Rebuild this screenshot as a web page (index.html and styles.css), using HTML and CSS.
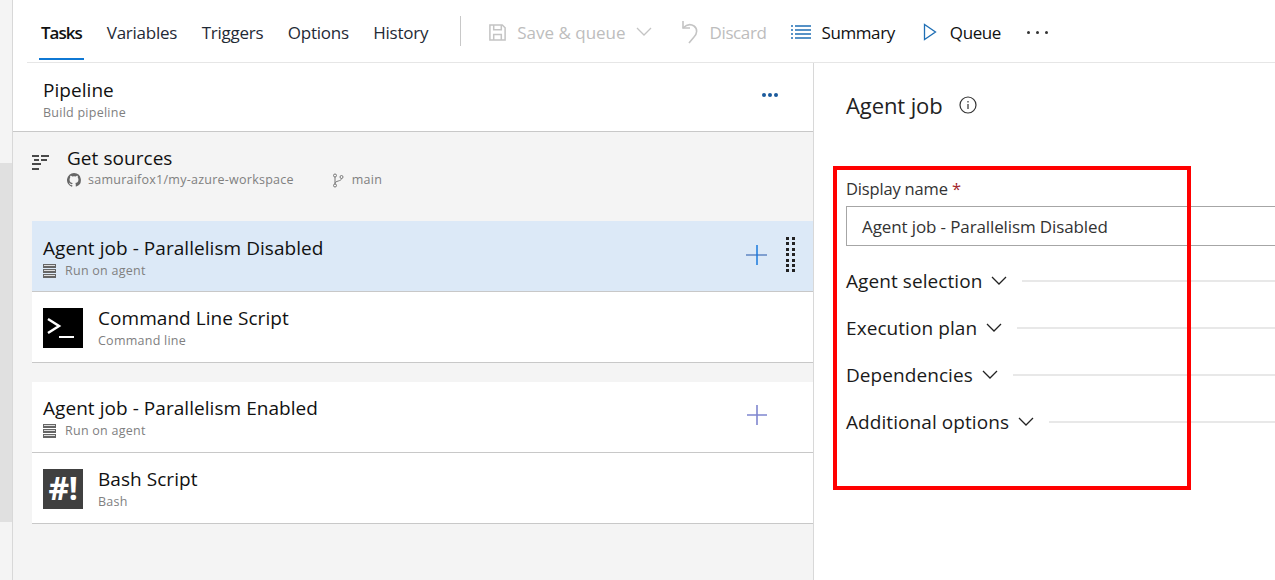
FILE: index.html
```html
<!DOCTYPE html>
<html lang="en">
<head>
    <meta charset="UTF-8">
    <title>Pipeline - Tasks</title>
    <link rel="stylesheet" href="styles.css">
</head>
<body>
    <div class="rail">
        <div class="rail-top"></div>
        <div class="rail-mid"></div>
    </div>
    <div class="main">
        <div class="toolbar">
            <a class="tab active">Tasks</a>
            <a class="tab">Variables</a>
            <a class="tab">Triggers</a>
            <a class="tab">Options</a>
            <a class="tab">History</a>
            <span class="divider"></span>
            <span class="cmd disabled save">
                <svg width="19" height="19" viewBox="0 0 20 20" fill="none" stroke="#c4c4c4" stroke-width="1.6"><path d="M2 2h13l3 3v13H2z"/><path d="M6 2v5h8V2M6 18v-6h8v6"/></svg>
                Save &amp; queue
                <svg class="chev" width="16" height="10" viewBox="0 0 16 10" fill="none" stroke="#c4c4c4" stroke-width="1.3"><path d="M1 1l7 7 7-7"/></svg>
            </span>
            <span class="cmd disabled discard">
                <svg width="18" height="24" viewBox="0 0 18 24" fill="none" stroke="#c4c4c4" stroke-width="1.6"><path d="M2 1v7h7"/><path d="M2 8c4-4 8-4 11-2 4 3 3 8 0 11l-5 6"/></svg>
                Discard
            </span>
            <span class="cmd summary">
                <svg width="20" height="14" viewBox="0 0 20 14" fill="none" stroke="#1f6fb5" stroke-width="1.3"><path d="M0 1h2M4 1h16M0 5h2M4 5h16M0 9h2M4 9h16M0 13h2M4 13h16"/></svg>
                Summary
            </span>
            <span class="cmd queue">
                <svg width="14" height="18" viewBox="0 0 14 18" fill="none" stroke="#1f6fb5" stroke-width="1.3"><path d="M1.500 1.500v15L12.500 9z"/></svg>
                Queue
            </span>
            <span class="more">
                <i></i><i></i><i></i>
            </span>
        </div>
        <div class="content">
            <div class="left">
                <div class="pipeline">
                    <div>
                        <div class="title">Pipeline</div>
                        <div class="sub">Build pipeline</div>
                    </div>
                    <span class="more blue"><i></i><i></i><i></i></span>
                </div>
                <div class="sources">
                    <svg class="src-icon" width="18" height="15" viewBox="0 0 18 15" fill="none" stroke="#111" stroke-width="1.400"><path d="M1 1h7M10 1h8M3 5h5M10 5h6M1 9h9M1 14h7"/></svg>
                    <div>
                        <div class="title">Get sources</div>
                        <div class="sub src-meta">
                            <svg width="14" height="14" viewBox="0 0 16 16" fill="#666"><path d="M8 0a8 8 0 0 0-2.500 15.600c.4.100.5-.2.500-.4v-1.400c-2.200.5-2.700-1-2.700-1-.4-.9-.9-1.200-.9-1.200-.7-.5.100-.5.100-.5.800.100 1.200.8 1.200.8.700 1.200 1.900.9 2.300.7.100-.5.300-.9.500-1.100-1.800-.2-3.600-.9-3.600-4 0-.9.300-1.600.8-2.100-.1-.2-.4-1 .1-2.100 0 0 .7-.2 2.200.8a7.600 7.600 0 0 1 4 0c1.500-1 2.200-.8 2.200-.8.400 1.100.2 1.900.1 2.100.5.600.8 1.300.8 2.100 0 3.100-1.900 3.700-3.600 3.900.3.300.5.800.5 1.500v2.200c0 .2.100.5.600.4A8 8 0 0 0 8 0z"/></svg>
                            <span class="repo">samuraifox1/my-azure-workspace</span>
                            <svg width="12" height="15" viewBox="0 0 12 15" fill="none" stroke="#777" stroke-width="1"><circle cx="3" cy="2.500" r="1.500"/><circle cx="3" cy="12.500" r="1.500"/><circle cx="9.500" cy="4" r="1.500"/><path d="M3 4v7M9.500 5.500c0 3-6.500 2-6.500 5"/></svg>
                            <span class="branch">main</span>
                        </div>
                    </div>
                </div>

                <div class="job selected">
                    <div>
                        <div class="title">Agent job - Parallelism Disabled</div>
                        <div class="sub agent">
                            <svg width="13" height="14" viewBox="0 0 13 14" fill="#666"><path d="M0 0h13v4H0zM0 5h13v4H0zM0 10h13v4H0z"/><path d="M1 1.500h11M1 6.500h11M1 11.500h11" stroke="#ddd" stroke-width="1"/></svg>
                            Run on agent
                        </div>
                    </div>
                    <svg class="plus" width="22" height="22" viewBox="0 0 22 22"><path d="M0 11h21" stroke="#7f9fd0" stroke-width="2"/><path d="M11 1v20" stroke="#1a78dc" stroke-width="1.500"/></svg>
                    <span class="grip"><i></i><i></i><i></i><i></i><i></i><i></i><i></i><i></i><i></i><i></i><i></i><i></i><i></i><i></i></span>
                </div>
                <div class="task">
                    <div class="task-icon black">
                        <svg width="40" height="40" viewBox="0 0 40 40" fill="none" stroke="#fff"><path d="M5 11l11 7-11 7" stroke-width="2.500"/><path d="M16 29h15" stroke-width="2"/></svg>
                    </div>
                    <div>
                        <div class="title">Command Line Script</div>
                        <div class="sub">Command line</div>
                    </div>
                </div>

                <div class="job second">
                    <div>
                        <div class="title">Agent job - Parallelism Enabled</div>
                        <div class="sub agent">
                            <svg width="13" height="14" viewBox="0 0 13 14" fill="#666"><path d="M0 0h13v4H0zM0 5h13v4H0zM0 10h13v4H0z"/><path d="M1 1.500h11M1 6.500h11M1 11.500h11" stroke="#ddd" stroke-width="1"/></svg>
                            Run on agent
                        </div>
                    </div>
                    <svg class="plus" width="22" height="22" viewBox="0 0 22 22"><path d="M1 11h20M11 1v20" stroke="#7f86cf" stroke-width="1.600"/></svg>
                </div>
                <div class="task">
                    <div class="task-icon gray">#!</div>
                    <div>
                        <div class="title">Bash Script</div>
                        <div class="sub">Bash</div>
                    </div>
                </div>
            </div>

            <div class="right">
                <div class="heading">
                    Agent job
                    <svg width="18" height="18" viewBox="0 0 18 18" fill="none" stroke="#333" stroke-width="1.200"><circle cx="9" cy="9" r="8"/><path d="M9 8v5M9 5v1.500"/></svg>
                </div>
                <label class="field-label">Display name <span class="req">*</span></label>
                <div class="input">Agent job - Parallelism Disabled</div>
                <div class="group first"><span>Agent selection</span><svg width="16" height="10" viewBox="0 0 16 10" fill="none" stroke="#222" stroke-width="1.300"><path d="M1 1l7 7 7-7"/></svg><b></b></div>
                <div class="group"><span>Execution plan</span><svg width="16" height="10" viewBox="0 0 16 10" fill="none" stroke="#222" stroke-width="1.300"><path d="M1 1l7 7 7-7"/></svg><b></b></div>
                <div class="group"><span>Dependencies</span><svg width="16" height="10" viewBox="0 0 16 10" fill="none" stroke="#222" stroke-width="1.300"><path d="M1 1l7 7 7-7"/></svg><b></b></div>
                <div class="group"><span>Additional options</span><svg width="16" height="10" viewBox="0 0 16 10" fill="none" stroke="#222" stroke-width="1.300"><path d="M1 1l7 7 7-7"/></svg><b></b></div>
            </div>
        </div>
    </div>
    <div class="redbox"></div>
</body>
</html>
```

FILE: styles.css
```css
html, body {
    height: 100%;
}
body {
    margin: 0;
    display: flex;
    height: 580px;
    overflow: hidden;
    background: #fff;
    color: #1a1a1a;
    font-family: "Open Sans", sans-serif;
    font-size: 17px;
}
.rail {
    width: 12px;
    border-right: 1px solid #d8d8d8;
    background: #f4f4f4;
}
.rail-top {
    height: 163px;
}
.rail-mid {
    height: 359px;
    background: #e0e0e0;
}
.main {
    flex: 1;
    min-width: 0;
}

/* toolbar */
.toolbar {
    height: 60px;
    padding-top: 2px;
    margin-left: 14px;
    display: flex;
    align-items: center;
    border-bottom: 1px solid #e6e6e6;
    padding-left: 14px;
    letter-spacing: -0.4px;
    white-space: nowrap;
}
.tab {
    position: relative;
    margin-right: 24.500px;
    letter-spacing: -0.25px;
    color: #1f2a36;
}
.tab.active {
    font-weight: 600;
    letter-spacing: -1px;
    margin-right: 25px;
    color: #111;
}
.tab.active::after {
    content: "";
    position: absolute;
    left: -2px;
    right: -2px;
    top: 37px;
    height: 2px;
    background: #0f78d4;
}
.divider {
    width: 1px;
    height: 30px;
    background: #c8c8c8;
    margin: -2px 27px 0 7.500px;
}
.cmd {
    display: flex;
    align-items: center;
    gap: 10px;
    color: #111;
}
.cmd.disabled {
    color: #bdbdbd;
}
.save {
    letter-spacing: 0;
    margin-right: 29px;
}
.discard {
    gap: 11px;
    margin-right: 25px;
}
.summary {
    margin-right: 28px;
}
.queue {
    gap: 13px;
    margin-right: 26px;
}
.more {
    display: flex;
    gap: 6px;
}
.more i {
    width: 3px;
    height: 3px;
    border-radius: 50%;
    background: #333;
}
.more.blue {
    gap: 2px;
}
.more.blue i {
    width: 4px;
    height: 4px;
    background: #1b5a9c;
}

/* left panel */
.content {
    display: flex;
    height: 517px;
}
.left {
    width: 801px;
    flex-shrink: 0;
    box-sizing: border-box;
    border-right: 1px solid #d8d8d8;
    background: #f4f4f4;
}
.title {
    font-size: 19px;
    line-height: 26px;
    letter-spacing: 0.05px;
    color: #111;
}
.sub {
    font-size: 12.500px;
    line-height: 18px;
    margin-top: 1px;
    letter-spacing: 0.25px;
    color: #80807f;
}
.pipeline {
    height: 69px;
    box-sizing: border-box;
    border-bottom: 1px solid #c8c8c8;
    background: #fff;
    padding: 14px 35px 0 30px;
    display: flex;
    justify-content: space-between;
}
.pipeline .more {
    margin-top: 16px;
}
.sources {
    height: 89px;
    display: flex;
    box-sizing: border-box;
    padding: 13px 0 0 18px;
}
.src-icon {
    margin: 10px 18px 0 0;
}
.src-meta {
    display: flex;
    align-items: center;
    gap: 7px;
    margin-top: 0;
}
.repo {
    margin-right: 31px;
}
.branch {
    margin-left: 1px;
}
.job {
    height: 71px;
    margin-left: 19px;
    box-sizing: border-box;
    border-bottom: 1px solid #c8c8c8;
    padding: 14px 0 0 11px;
    background: #fff;
    display: flex;
    align-items: flex-start;
}
.job.selected {
    background: #dce9f7;
}
.job.second {
    margin-top: 19px;
    padding-top: 13px;
}
.job > div {
    flex: 1;
}
.agent {
    display: flex;
    align-items: center;
    gap: 9px;
}
.plus {
    margin: 9px 45px 0 0;
}
.job.selected .plus {
    margin: 9px 18px 0 0;
}
.grip {
    display: grid;
    grid-template-columns: 3px 3px;
    gap: 2.400px 3px;
    margin: 2px 18px 0 0;
}
.grip i {
    width: 3px;
    height: 3px;
    background: #222;
}
.task {
    height: 71px;
    margin-left: 19px;
    box-sizing: border-box;
    border-bottom: 1px solid #c8c8c8;
    background: #fff;
    display: flex;
    padding: 13px 0 0 11px;
    gap: 15px;
}
.task-icon {
    width: 40px;
    height: 40px;
    margin-top: 3px;
    color: #fff;
    text-align: center;
}
.task-icon.black {
    background: #000;
}
.task-icon.gray {
    background: #404040;
    font-size: 32px;
    font-weight: 700;
    line-height: 38px;
    letter-spacing: -0.5px;
}

/* right panel */
.right {
    flex: 1;
    min-width: 0;
    padding-left: 32px;
    overflow: hidden;
}
.heading {
    margin-top: 26px;
    height: 32px;
    display: flex;
    align-items: center;
    gap: 16px;
    font-size: 22px;
    letter-spacing: -0.1px;
    color: #222;
}
.field-label {
    display: block;
    margin-top: 56px;
    line-height: 24px;
    font-size: 16.500px;
    letter-spacing: -0.17px;
    color: #333;
}
.req {
    color: #a4262c;
}
.input {
    box-sizing: border-box;
    height: 40px;
    margin-top: 5px;
    margin-right: -30px;
    border: 1px solid #a6a6a6;
    padding: 2px 0 0 15px;
    font-size: 17px;
    line-height: 36px;
    letter-spacing: -0.12px;
    color: #333;
}
.group {
    height: 47px;
    display: flex;
    align-items: center;
    gap: 9px;
    font-size: 19px;
    letter-spacing: 0.07px;
    color: #1a1a1a;
}
.group.first {
    margin-top: 11px;
}
.group b {
    flex: 1;
    height: 2px;
    margin-left: 6px;
    background: #e8e8e8;
}

/* annotation over the screenshot */
.redbox {
    position: absolute;
    left: 833px;
    top: 166px;
    width: 350px;
    height: 316px;
    border: 4px solid #f00;
}
```
